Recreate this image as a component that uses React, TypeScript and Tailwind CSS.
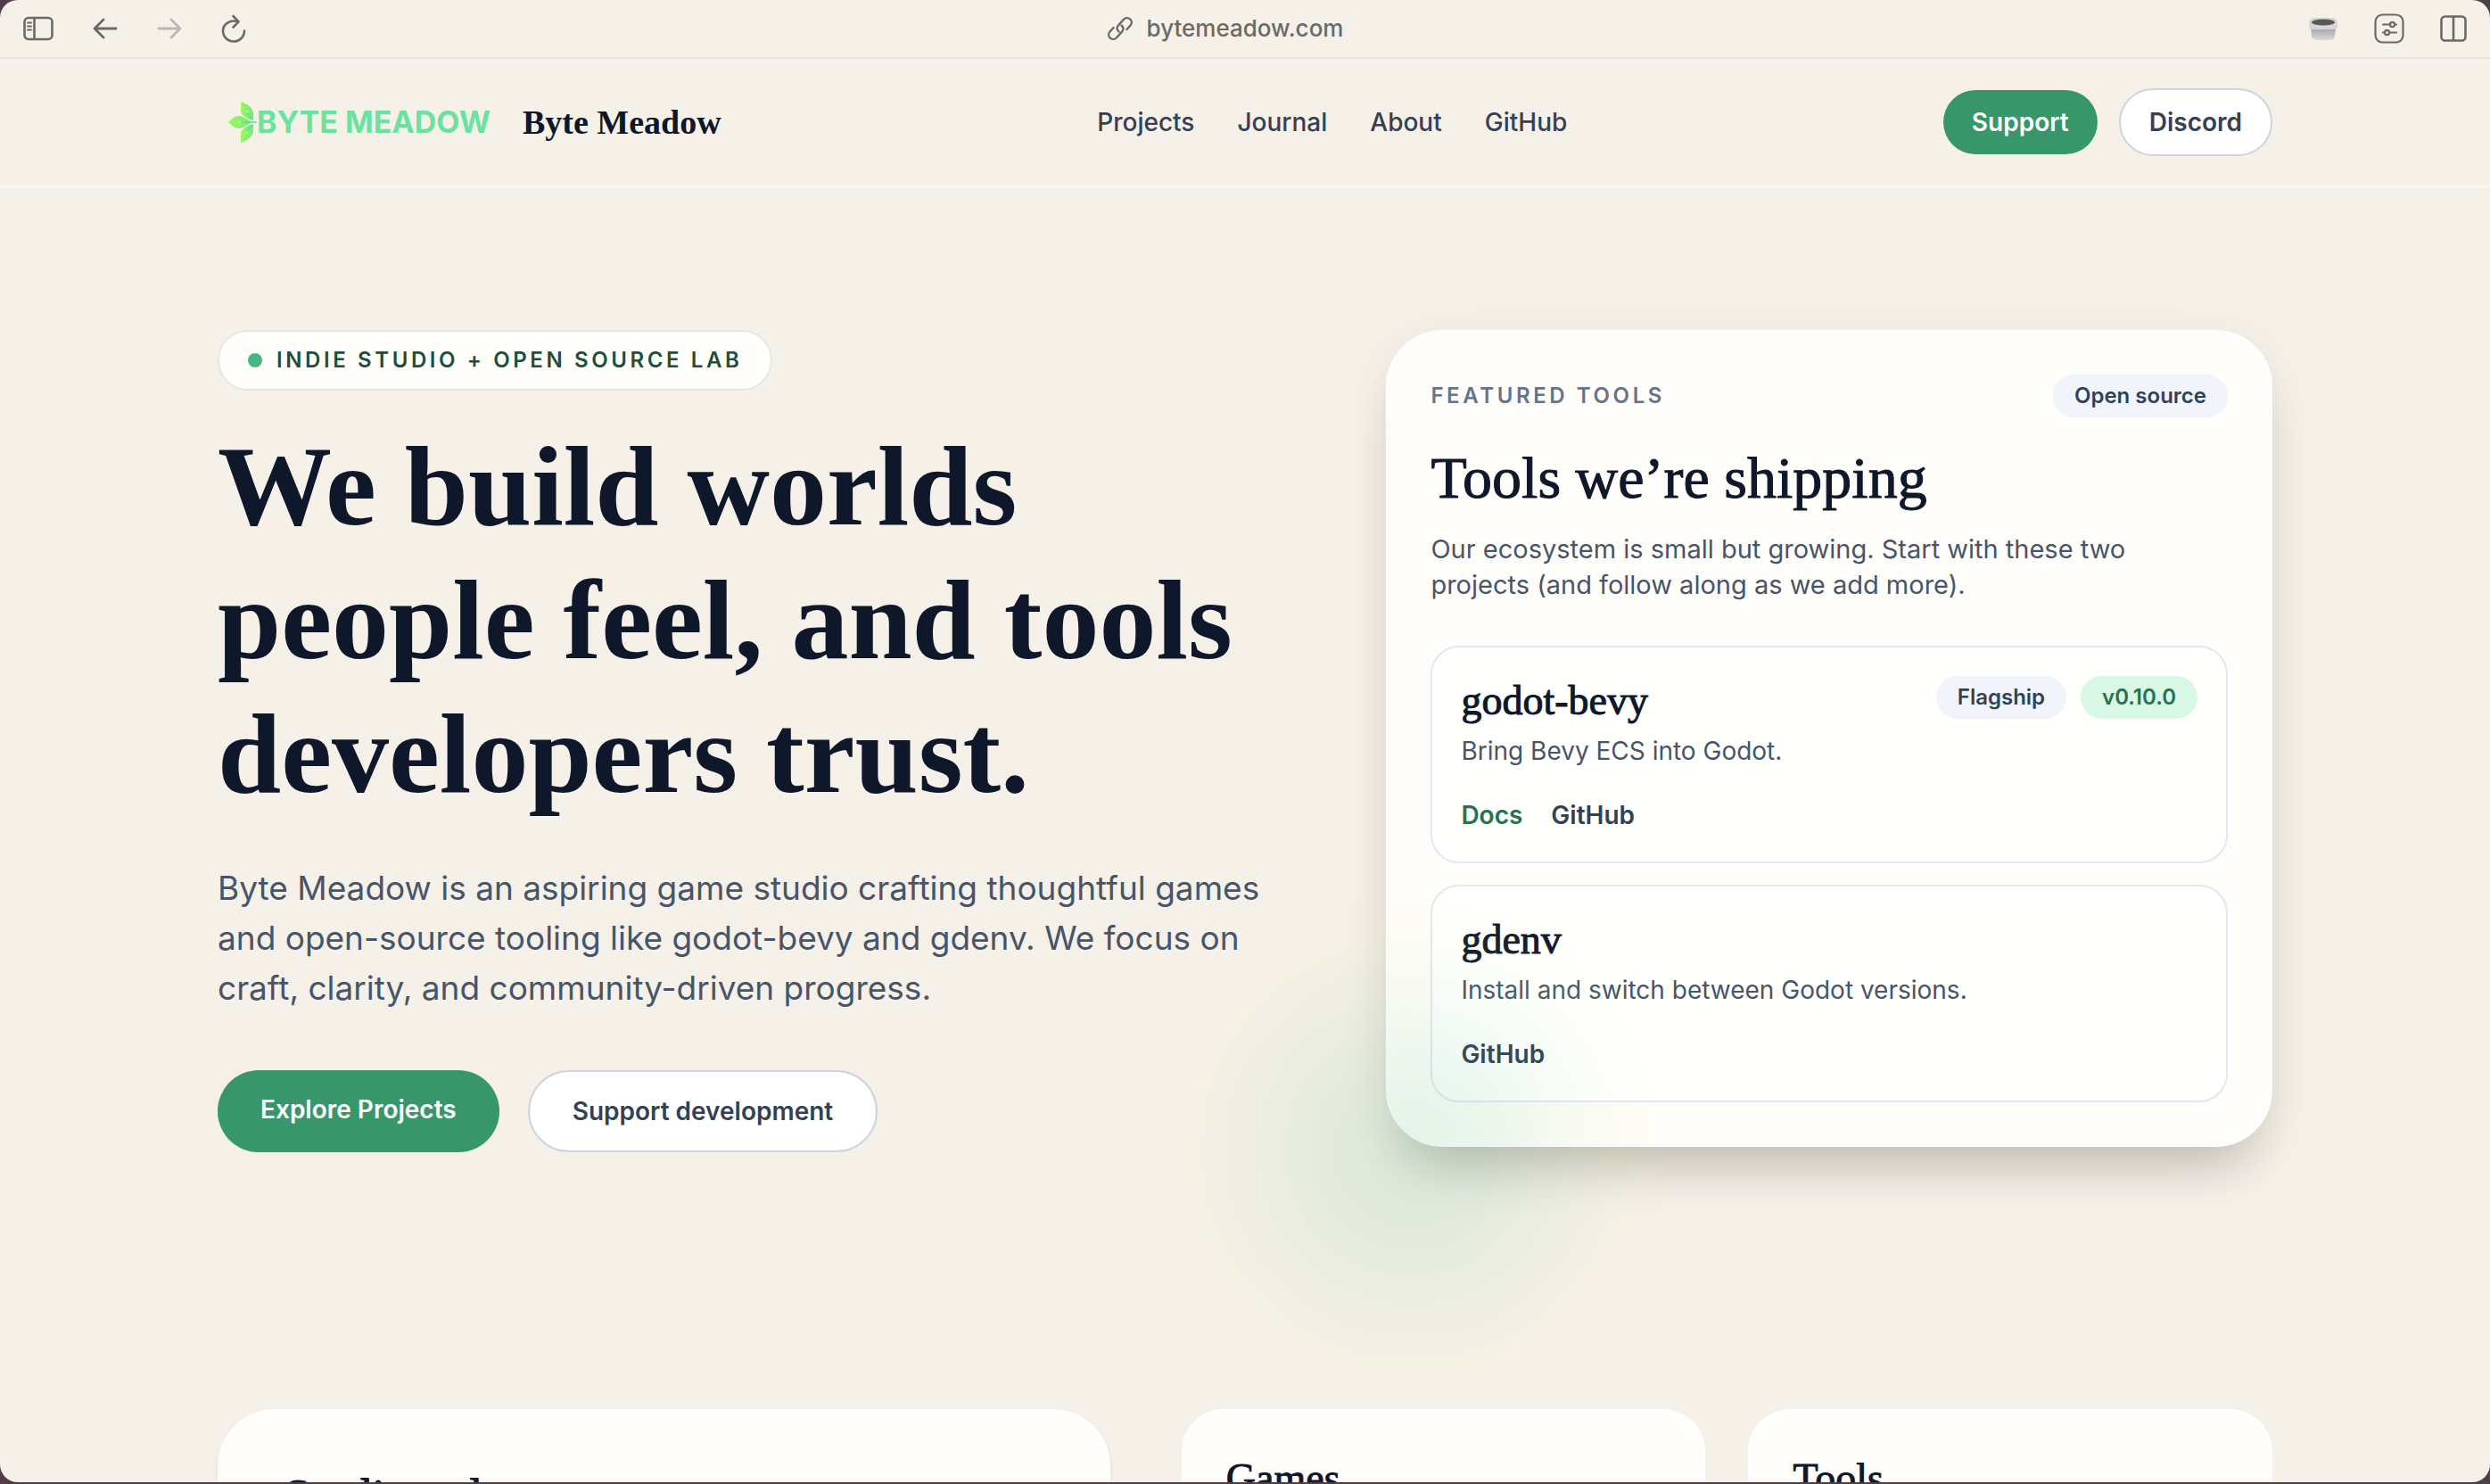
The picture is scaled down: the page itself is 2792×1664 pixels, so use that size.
import type { ReactNode } from 'react';

const navLinks = ['Projects', 'Journal', 'About', 'GitHub'];

const serif = "font-['Liberation_Serif',serif]";
// Regular cuts are thickened a little so that they read as a medium weight
const serifMedium = "font-['Liberation_Serif',serif] [-webkit-text-stroke:1px]";

function SidebarIcon() {
  return (
    <svg width="34" height="28" viewBox="0 0 34 28" fill="none" stroke="currentColor" strokeWidth="2.6">
      <rect x="1.5" y="2" width="31" height="24" rx="4.5" />
      <path d="M12.5 2v24" />
      <path d="M5 7.5h4M5 11.5h4M5 15.5h4" strokeWidth="2" strokeLinecap="round" />
    </svg>
  );
}

function ArrowIcon({ flip = false }: { flip?: boolean }) {
  return (
    <svg
      width="28"
      height="24"
      viewBox="0 0 28 24"
      fill="none"
      stroke="currentColor"
      strokeWidth="2.8"
      strokeLinecap="round"
      strokeLinejoin="round"
      className={flip ? 'rotate-180' : ''}
    >
      <path d="M26 12H2M12 2 2 12l10 10" />
    </svg>
  );
}

function ReloadIcon() {
  return (
    <svg
      width="28"
      height="32"
      viewBox="0 0 28 32"
      fill="none"
      stroke="currentColor"
      strokeWidth="2.6"
      strokeLinecap="round"
      strokeLinejoin="round"
    >
      <path d="M19 8.300C10 5.500 2 11 2 18.500a12 12 0 0 0 24 0" />
      <path d="M13.500 2l6 6.300-6 6.200" />
    </svg>
  );
}

function LinkIcon() {
  return (
    <svg width="28" height="28" viewBox="0 0 28 28" fill="none" stroke="currentColor" strokeWidth="2.4" strokeLinecap="round">
      <path d="M12.500 17.500c-2.500-2-2.500-5.200-.5-7.200l6-6.500a5 5 0 0 1 7.500 6.700l-4 4.500" />
      <path d="M15.500 10.500c2.500 2 2.500 5.200.5 7.200l-6 6.500a5 5 0 0 1-7.500-6.700l4-4.500" />
    </svg>
  );
}

function CupIcon() {
  return (
    <svg width="34" height="26" viewBox="0 0 34 26">
      <defs>
        <linearGradient id="cup" x1="0" y1="0" x2="0" y2="1">
          <stop offset="0" stopColor="#9f9f9f" />
          <stop offset="1" stopColor="#dadada" />
        </linearGradient>
      </defs>
      <path d="M3 11h28l-1 11q-1 4-6 4H10q-5 0-6-4z" fill="url(#cup)" />
      <path d="M1 7q0-5 5-6h22q5 1 5 6v3q0 4-6 4H7q-6 0-6-4z" fill="#d6d6d6" />
      <ellipse cx="17" cy="6" rx="13" ry="3.500" fill="#595959" />
    </svg>
  );
}

function SettingsIcon() {
  return (
    <svg width="34" height="34" viewBox="0 0 34 34" fill="none" stroke="currentColor" strokeWidth="2.2" strokeLinecap="round">
      <rect x="1.5" y="1.5" width="31" height="31" rx="8" />
      <path d="M10 12.500h7.500M23.500 12.500h1.500M10 21.500h1.500M17.500 21.500h7.500" />
      <circle cx="20.5" cy="12.5" r="2.6" />
      <circle cx="14.5" cy="21.5" r="2.6" />
    </svg>
  );
}

function SplitIcon() {
  return (
    <svg width="30" height="30" viewBox="0 0 30 30" fill="none" stroke="currentColor" strokeWidth="2.6">
      <rect x="1.5" y="1.5" width="27" height="27" rx="4" />
      <path d="M15 1.500v27" />
    </svg>
  );
}

function LeafMark() {
  return (
    <svg width="32" height="48" viewBox="0 0 32 48">
      <defs>
        <linearGradient id="leaf" x1="0" y1="0" x2="1" y2="0">
          <stop offset="0" stopColor="#a0f65c" />
          <stop offset="1" stopColor="#74e884" />
        </linearGradient>
      </defs>
      <g fill="url(#leaf)">
        <path d="M14 1c8 2 14 8 14 13v8c-8-2-14-6-14-11z" />
        <path d="M14 47c8-2 14-8 14-13v-8c-8 2-14 6-14 11z" />
        <path d="M0 24c4-4 7-7 12-7s9 4 15 7c-6 3-10 7-15 7s-8-3-12-7z" />
      </g>
      <path d="M13 24h19M21 13l5 8M21 35l5-8" stroke="#5fdf96" strokeWidth="1.5" fill="none" />
      <g fill="#b8fb7c">
        <circle cx="21" cy="12" r="1.6" />
        <circle cx="13" cy="24" r="1.6" />
        <circle cx="21" cy="36" r="1.6" />
      </g>
    </svg>
  );
}

function Toolbar() {
  return (
    <div className="grid grid-cols-[1fr_auto_1fr] items-center h-[66px] px-[26px] border-b-2 border-[#e8e3dc] text-[#6c6a65]">
      <div className="flex items-center gap-11">
        <button aria-label="Toggle sidebar"><SidebarIcon /></button>
        <button aria-label="Back"><ArrowIcon /></button>
        <button aria-label="Forward" className="text-[#bbb7b0]"><ArrowIcon flip /></button>
        <button aria-label="Reload"><ReloadIcon /></button>
      </div>
      <div className="flex items-center gap-4 pr-11 text-[26px] font-medium">
        <LinkIcon />
        <span>bytemeadow.com</span>
      </div>
      <div className="flex items-center justify-end gap-10">
        <button aria-label="Coffee extension"><CupIcon /></button>
        <button aria-label="Page settings"><SettingsIcon /></button>
        <button aria-label="Split view"><SplitIcon /></button>
      </div>
    </div>
  );
}

function Header() {
  return (
    <header className="border-b-2 border-[#fbf8f4]">
      <div className="max-w-[2304px] mx-auto h-[142px] flex items-center justify-between">
        <a href="#" className="flex items-center gap-9 pl-3">
          <span className="flex items-center">
            <LeafMark />
            <span className="text-[34px] font-bold text-[#69e39f]">BYTE MEADOW</span>
          </span>
          <span className={`${serif} text-[38px] font-bold text-[#0f172a]`}>Byte Meadow</span>
        </a>
        <nav className="flex gap-12 font-medium text-[#334155]">
          {navLinks.map((link) => (
            <a key={link} href="#">{link}</a>
          ))}
        </nav>
        <div className="flex items-center gap-6 font-semibold">
          <a href="#" className="rounded-full bg-[#37966a] px-8 py-4 text-white">Support</a>
          <a href="#" className="rounded-full bg-white border-2 border-[#cbd5e1] px-8 py-4 text-[#334155]">Discord</a>
        </div>
      </div>
    </header>
  );
}

function Tag({ children, green = false }: { children: ReactNode; green?: boolean }) {
  return (
    <span
      className={`rounded-full px-6 py-2 text-[24px] leading-[32px] font-semibold ${
        green ? 'bg-[#d9f7e5] text-[#26734f]' : 'bg-[#f1f5fb] text-[#334155]'
      }`}
    >
      {children}
    </span>
  );
}

function ToolCard({ name, text, tags, children }: { name: string; text: string; tags?: ReactNode; children: ReactNode }) {
  return (
    <article className="rounded-[32px] border-2 border-[#e2e8f0] bg-white/80 p-8">
      <div className="flex items-start justify-between">
        <h3 className={`${serifMedium} text-[46px] leading-[56px] text-[#0f172a]`}>{name}</h3>
        <div className="flex gap-4">{tags}</div>
      </div>
      <p className="mt-2 text-[#475569]">{text}</p>
      <div className="mt-8 flex gap-8 font-semibold text-[#334155]">{children}</div>
    </article>
  );
}

function FeaturedTools() {
  return (
    <aside className="rounded-[64px] border-2 border-white bg-[#fffdf9] p-12 shadow-[0_44px_60px_-28px_rgba(40,40,30,0.24),0_12px_56px_rgba(60,40,20,0.07)]">
      <div className="flex items-center justify-between">
        <p className="text-[24px] leading-[32px] font-semibold tracking-[0.15em] uppercase text-[#64748b]">Featured tools</p>
        <Tag>Open source</Tag>
      </div>
      <h2 className={`${serifMedium} mt-8 text-[66px] leading-[72px] text-[#0f172a]`}>Tools we’re shipping</h2>
      <p className="mt-6 text-[29px] text-[#475569]">
        Our ecosystem is small but growing. Start with these two
        <br />
        projects (and follow along as we add more).
      </p>
      <div className="mt-12 flex flex-col gap-6">
        <ToolCard
          name="godot-bevy"
          text="Bring Bevy ECS into Godot."
          tags={
            <>
              <Tag>Flagship</Tag>
              <Tag green>v0.10.0</Tag>
            </>
          }
        >
          <a href="#" className="text-[#26734f]">Docs</a>
          <a href="#">GitHub</a>
        </ToolCard>
        <ToolCard name="gdenv" text="Install and switch between Godot versions.">
          <a href="#">GitHub</a>
        </ToolCard>
      </div>
    </aside>
  );
}

function Hero() {
  return (
    <section className="relative max-w-[2304px] mx-auto py-40 grid grid-cols-[11fr_9fr] items-start gap-24">
      <div>
        <p className="flex w-fit items-center gap-4 rounded-full border-2 border-[#e2e9e3] bg-[#fffefa] px-8 py-4 text-[24px] leading-[32px] font-semibold tracking-[0.15em] uppercase text-[#1d4f3a]">
          <span className="size-4 rounded-full bg-[#43b883]" />
          Indie studio + open source lab
        </p>
        <h1 className={`${serif} mt-8 text-[128px] leading-[150px] font-bold text-[#0f172a]`}>
          We build worlds
          <br />
          people feel, and tools
          <br />
          developers trust.
        </h1>
        <p className="mt-12 text-[37px] leading-[56px] text-[#475569]">
          Byte Meadow is an aspiring game studio crafting thoughtful games
          <br />
          and open-source tooling like godot-bevy and gdenv. We focus on
          <br />
          craft, clarity, and community-driven progress.
        </p>
        <div className="mt-16 flex gap-8 font-semibold">
          <a href="#" className="rounded-full bg-[#37966a] px-12 py-6 text-white">Explore Projects</a>
          <a href="#" className="rounded-full bg-white border-2 border-[#cbd5e1] px-12 py-6 text-[#334155]">Support development</a>
        </div>
      </div>
      <FeaturedTools />
      {/* Soft green glow over the card corner */}
      <div className="absolute left-[1048px] top-[790px] size-[580px] rounded-full pointer-events-none bg-[radial-gradient(closest-side,rgba(67,184,131,0.15),rgba(67,184,131,0.11)_28%,rgba(90,190,120,0.05)_60%,rgba(225,240,150,0.05)_85%,transparent)]" />
    </section>
  );
}

function Pillars() {
  return (
    <section className="max-w-[2304px] mx-auto pt-32 grid grid-cols-[9fr_11fr] gap-20">
      <article className="rounded-[64px] border-2 border-white bg-[#fffefa] p-18 shadow-md">
        <h2 className={`${serifMedium} text-[54px] leading-[48px] text-[#0f172a]`}>Studio pulse</h2>
      </article>
      <div className="grid grid-cols-2 gap-12">
        {['Games', 'Tools'].map((title) => (
          <article key={title} className="rounded-[48px] border-2 border-white bg-[#fffefa] p-12">
            <h3 className={`${serifMedium} text-[46px] leading-[56px] text-[#0f172a]`}>{title}</h3>
          </article>
        ))}
      </div>
    </section>
  );
}

export default function App() {
  return (
    <div className="h-screen bg-[#4f3d48] pb-[2px]">
      <div className="h-full overflow-hidden rounded-[20px] bg-[#f5f0e8] font-[Inter,sans-serif] text-[28px] leading-[40px]">
        <Toolbar />
        <Header />
        <main>
          <Hero />
          <Pillars />
        </main>
      </div>
    </div>
  );
}
